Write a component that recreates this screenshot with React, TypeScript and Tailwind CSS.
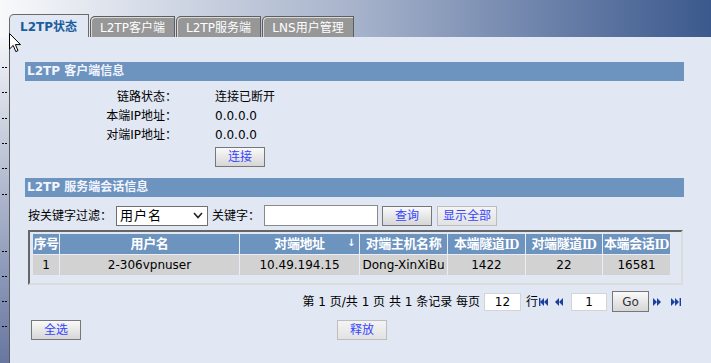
import type { ReactNode } from 'react';

const FONT = "font-['DejaVu_Sans','Noto_Sans_CJK_SC',sans-serif]";

const TABS = ['L2TP状态', 'L2TP客户端', 'L2TP服务端', 'LNS用户管理'];
const TAB_WIDTHS = ['w-[80px]', 'w-[85px]', 'w-[85px]', 'w-[92px]'];

// y positions of the little dashes on the left rail (as gaps)
const DASH_GAPS = ['mt-[30px]', 'mt-[24px]', 'mt-[25px]', 'mt-[24px]', 'mt-[24px]', 'mt-[25px]', 'mt-[56px]', 'mt-[24px]', 'mt-[24px]', 'mt-[24px]'];

const COLS = [
  { title: '序号', value: '1' },
  { title: '用户名', value: '2-306vpnuser' },
  { title: '对端地址', value: '10.49.194.15', sort: true },
  { title: '对端主机名称', value: 'Dong-XinXiBu' },
  { title: '本端隧道', id: true, value: '1422' },
  { title: '对端隧道', id: true, value: '22' },
  { title: '本端会话', id: true, value: '16581' },
];

function Btn({ children, className = '', light = false }: { children: ReactNode; className?: string; light?: boolean }) {
  return (
    <button
      type="button"
      className={`flex h-[20px] items-center justify-center border bg-linear-to-b text-[12px] leading-none text-[#3344ff] ${
        light ? 'border-[#bdbdbd] from-[#f4f4f4] to-[#e2e2e2]' : 'border-[#777] from-[#fafafa] to-[#d6d6d6]'
      } ${className}`}
    >
      {children}
    </button>
  );
}

function SectionHead({ children }: { children: ReactNode }) {
  return (
    <div className="h-[19px] bg-[#6d93bf] pl-[2px] text-[12px] font-bold leading-[19px] text-[#f2f5ff]">{children}</div>
  );
}

function NavIcon({ dir, bar }: { dir: 'l' | 'r'; bar?: boolean }) {
  const tri = dir === 'l' ? ['M5 0 L1 4 L5 8 Z', 'M9 0 L5 4 L9 8 Z'] : ['M0 0 L4 4 L0 8 Z', 'M4 0 L8 4 L4 8 Z'];
  return (
    <svg width="10" height="8" viewBox="0 0 10 8" className="fill-[#1d3f9c]">
      {tri.map((d) => (
        <path key={d} d={d} />
      ))}
      {bar && (dir === 'l' ? <rect x="0" y="0" width="1.4" height="8" /> : <rect x="8.6" y="0" width="1.4" height="8" />)}
    </svg>
  );
}

export default function App() {
  return (
    <div className={`relative flex h-[363px] w-[711px] flex-col overflow-hidden bg-[#e1e7f3] text-[12px] text-black ${FONT}`}>
      {/* Top bar with tabs */}
      <div className="flex h-[37px] shrink-0 items-end gap-[1px] bg-linear-to-r from-[#f8f9fb] via-[#a7b3cb] to-[#3c598d] pl-[9px]">
        {TABS.map((tab, i) =>
          i === 0 ? (
            <div
              key={tab}
              className={`${TAB_WIDTHS[i]} h-[23px] rounded-tl-[5px] border-x border-t border-[#6a6a6a] bg-[#e1e7f3] pl-[10px] pt-[4px] text-[12px] font-bold leading-[16px] text-[#1b5d9d]`}
            >
              {tab}
            </div>
          ) : (
            <div
              key={tab}
              className={`${TAB_WIDTHS[i]} h-[21px] rounded-tl-[5px] border-x border-t border-[#5e5e5e] bg-[#979797] shadow-[inset_1px_1px_0_#d9d9d9] pt-[3px] text-center text-[12px] leading-[16px] text-white`}
            >
              {tab}
            </div>
          ),
        )}
      </div>

      <div className="flex min-h-0 flex-1">
        {/* left rail */}
        <div className="flex w-[9px] shrink-0 flex-col bg-linear-to-b from-[#f4f5f8] to-[#6877a0]">
          {DASH_GAPS.map((g, i) => (
            <div key={i} className={`${g} ml-[2px] flex gap-[1px]`}>
              <span className="h-[1px] w-[2px] bg-black" />
              <span className="h-[1px] w-[2px] bg-black" />
            </div>
          ))}
        </div>

        {/* main panel */}
        <div className="flex-1 border-l border-[#5a5a5a] pl-[15px] pr-[27px] pt-[25px]">
          <SectionHead>L2TP 客户端信息</SectionHead>

          <div className="mt-[7px] grid grid-cols-[152px_1fr] gap-x-[38px] leading-[19px]">
            <div className="text-right">链路状态：</div>
            <div>连接已断开</div>
            <div className="text-right">本端IP地址：</div>
            <div>0.0.0.0</div>
            <div className="text-right">对端IP地址：</div>
            <div>0.0.0.0</div>
          </div>
          <Btn className="ml-[190px] mt-[2px] w-[50px]">连接</Btn>

          <div className="mt-[11px]">
            <SectionHead>L2TP 服务端会话信息</SectionHead>
          </div>

          {/* filter */}
          <div className="mt-[8px] flex h-[21px] items-center pl-[3px]">
            <span>按关键字过滤：</span>
            <div className="ml-[4px] flex h-[20px] w-[92px] items-center justify-between border border-[#707070] bg-white pl-[3px] pr-[4px]">
              <span className="text-[13px] tracking-[1px]">用户名</span>
              <svg width="10" height="7" viewBox="0 0 10 7" className="stroke-[#222]" fill="none" strokeWidth="1.6">
                <polyline points="1,1 5,5.5 9,1" />
              </svg>
            </div>
            <span className="ml-[4px]">关键字：</span>
            <div className="ml-[4px] h-[21px] w-[114px] border border-[#8a8a8a] bg-white" />
            <Btn className="ml-[4px] w-[50px]">查询</Btn>
            <Btn light className="ml-[5px] w-[60px]">显示全部</Btn>
          </div>

          {/* session table */}
          <div className="ml-[3px] mt-[4px] h-[55px] w-[655px] border-2 border-b-[#dcdcdc] border-l-[#666] border-r-[#dcdcdc] border-t-[#666] pl-[3px] pt-[2px]">
            <div className="grid w-[637px] grid-cols-[26px_179px_119px_87px_77px_76px_67px] gap-px bg-[#e9edf6]">
              {COLS.map((c) => (
                <div
                  key={c.title}
                  className="relative flex h-[20px] items-center justify-center overflow-visible whitespace-nowrap bg-[#6d93bf] text-[13px] font-bold tracking-[-0.4px] text-white"
                >
                  {c.title}
                  {c.id && <span className="font-['Liberation_Serif',serif] text-[14px] tracking-[-0.5px]">ID</span>}
                  {c.sort && <span className="absolute right-[4px] top-[1px] text-[10px]">↓</span>}
                </div>
              ))}
              {COLS.map((c) => (
                <div key={c.title + 'v'} className="flex h-[20px] items-center justify-center bg-[#d2d2d2]">
                  {c.value}
                </div>
              ))}
            </div>
          </div>

          {/* pagination */}
          <div className="mr-[3px] mt-[6px] flex h-[21px] items-center justify-end">
            <span>第 1 页/共 1 页 共 1 条记录 每页</span>
            <div className="ml-[4px] flex h-[18px] w-[37px] items-center justify-center border border-[#d4d4d4] bg-white">12</div>
            <span className="ml-[5px]">行</span>
            <span className="ml-[1px]"><NavIcon dir="l" bar /></span>
            <span className="ml-[5px]"><NavIcon dir="l" /></span>
            <div className="ml-[7px] flex h-[18px] w-[36px] items-center justify-center border border-[#d4d4d4] bg-white">1</div>
            <button
              type="button"
              className="ml-[5px] h-[21px] w-[37px] border border-[#777] bg-linear-to-b from-[#fafafa] to-[#d6d6d6] text-[12px] text-[#333]"
            >
              Go
            </button>
            <span className="ml-[4px]"><NavIcon dir="r" /></span>
            <span className="ml-[8px]"><NavIcon dir="r" bar /></span>
          </div>

          {/* bottom buttons */}
          <div className="mt-[8px] flex">
            <Btn className="ml-[6px] w-[50px]">全选</Btn>
            <Btn light className="ml-[256px] w-[50px]">释放</Btn>
          </div>
        </div>
      </div>

      {/* mouse cursor */}
      <svg width="13" height="20" viewBox="0 0 13 20" className="absolute left-[9px] top-[33px]">
        <path d="M0.5 0.5 L0.5 16 L4.2 12.4 L6.8 18.6 L9 17.6 L6.4 11.6 L11.5 11.6 Z" fill="white" stroke="black" strokeWidth="1" />
      </svg>
    </div>
  );
}
